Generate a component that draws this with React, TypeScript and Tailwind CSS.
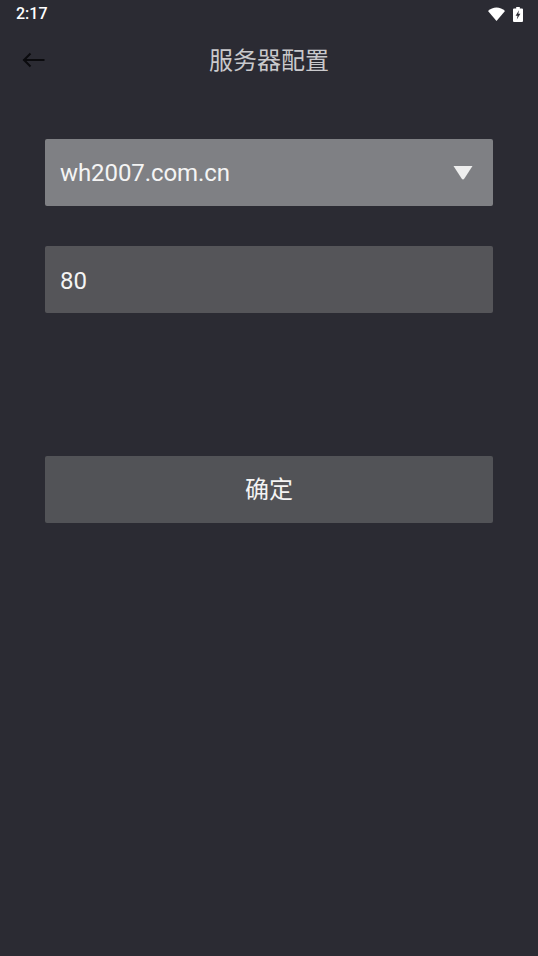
import React from 'react';

const font = "font-['Roboto','Noto_Sans_CJK_SC',sans-serif]";

const App: React.FC = () => {
  return (
    <div className={`w-[538px] h-[956px] bg-[#2b2b33] ${font} flex flex-col overflow-hidden`}>
      {/* Status bar */}
      <div className="h-[27px] flex items-center justify-between pl-[16px] pr-[15px]">
        <span className="text-[16px] font-medium leading-none text-white pt-[1px]">2:17</span>
        <div className="flex items-center gap-[8px] pt-[1px]">
          <svg width="17" height="14" viewBox="0 0 17 14">
            <path d="M0 4 C4.5 -0.8 12.5 -0.8 17 4 L8.5 14 Z" fill="#fff" />
          </svg>
          <svg width="10" height="15" viewBox="0 0 10 15">
            <path fillRule="evenodd" d="M3.2 0h3.6v1.5h2.2a1 1 0 0 1 1 1V14a1 1 0 0 1-1 1H1a1 1 0 0 1-1-1V2.5a1 1 0 0 1 1-1h2.2z M6 3.2 L2.6 8.8 H4.6 L3.8 12.6 L7.4 6.8 H5.3 Z" fill="#fff" />
          </svg>
        </div>
      </div>

      {/* Title bar */}
      <div className="relative h-[67px] flex items-center justify-center">
        <svg className="absolute left-[22px] top-[24px]" width="23" height="18" viewBox="0 0 23 18" fill="none" stroke="#0b0b0e" strokeWidth="2">
          <path d="M1.5 9 H22.5" />
          <path d="M8.5 2.5 L2 9 L8.5 15.5" />
        </svg>
        <span className="text-[24px] leading-none text-[#c9c9cc]">服务器配置</span>
      </div>

      {/* Form */}
      <div className="flex flex-col px-[45px] pt-[45px]">
        <div className="h-[67px] rounded-[2px] bg-[#7f8084] flex items-center justify-between pl-[15px] pr-[20px]">
          <span className="text-[24px] tracking-[-0.08px] text-[#f4f4f4]">wh2007.com.cn</span>
          <svg width="20" height="14" viewBox="0 0 20 14">
            <path d="M0.5 0 H19.5 L11.4 12.6 Q10 14.4 8.6 12.6 Z" fill="#eeeeee" />
          </svg>
        </div>
        <div className="mt-[40px] h-[67px] rounded-[2px] bg-[#555559] flex items-center pl-[15px] pt-[2px]">
          <span className="text-[24px] text-[#f4f4f4]">80</span>
        </div>
        <button className="mt-[143px] h-[67px] rounded-[2px] bg-[#525357] flex items-center justify-center text-[24px] text-[#f4f4f4]">
          确定
        </button>
      </div>
    </div>
  );
};

export default App;
